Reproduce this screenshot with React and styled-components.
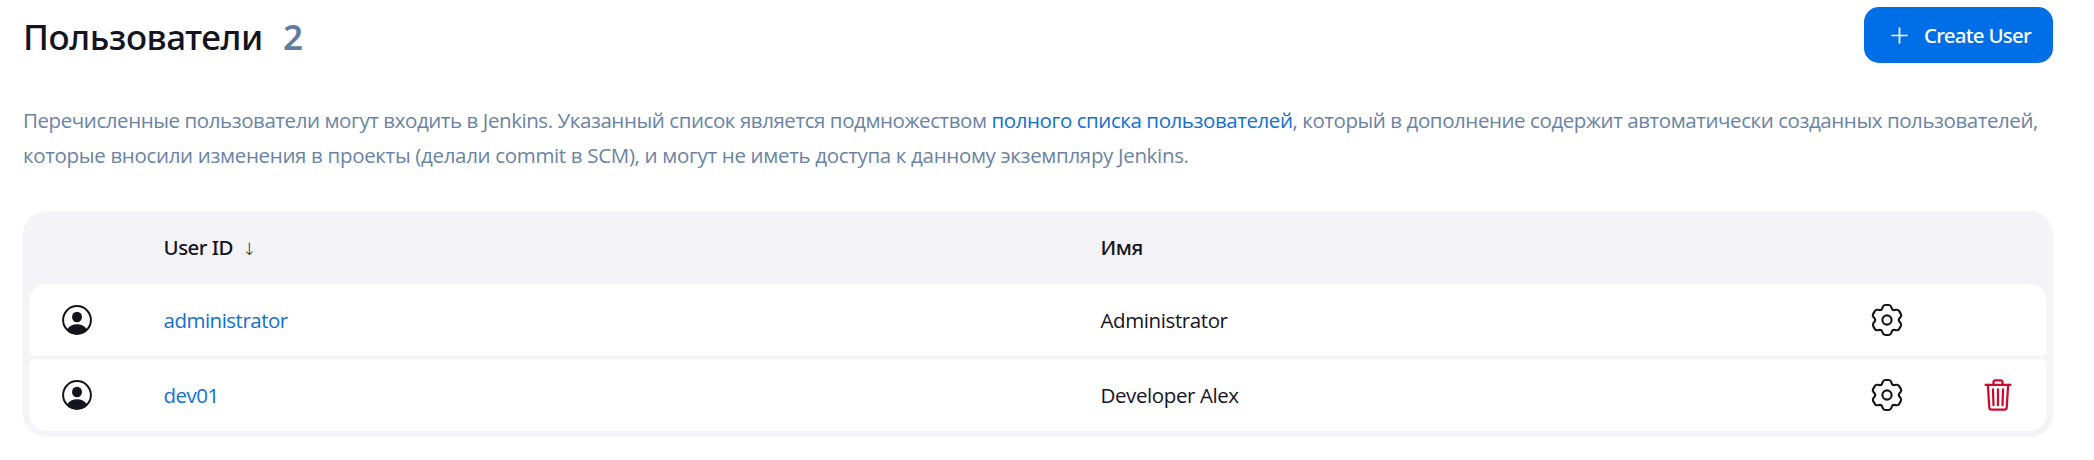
import React from "react";
import styled, { createGlobalStyle } from "styled-components";
import { IoTrashOutline } from "react-icons/io5";

const GlobalStyle = createGlobalStyle`
  * { box-sizing: border-box; }
  body {
    margin: 0;
    background: #fff;
    color: #14141f;
    font: 400 20.5px/35px "Open Sans", "Noto Sans", sans-serif;
  }
`;

const Page = styled.main`
  width: 2094px;
  height: 460px;
  padding: 7px 41px 0 23px;
  overflow: hidden;
`;

const AppBar = styled.header`
  display: flex;
  align-items: center;
  justify-content: space-between;
  height: 56px;
  margin-bottom: 40px;
`;

const Title = styled.h1`
  display: flex;
  gap: 20px;
  margin: 4px 0 0;
  font-family: "Noto Sans", sans-serif;
  font-size: 35px;
  line-height: 48px;
  font-weight: 500;
  letter-spacing: -0.4px;
`;

const Count = styled.span`
  color: #607ca0;
  font-weight: 600;
`;

const CreateButton = styled.button`
  display: flex;
  align-items: center;
  gap: 16px;
  width: 189px;
  height: 56px;
  padding: 0 0 0 27px;
  border: 0;
  border-radius: 15px;
  background: #006ee6;
  color: #fff;
  font: 500 20.5px/35px "Noto Sans", sans-serif;
  letter-spacing: -0.75px;
  white-space: nowrap;
`;

const Description = styled.p`
  margin: 0 0 38px;
  color: #6a83a5;
  white-space: nowrap;
`;

const Line = styled.span`
  display: block;
  letter-spacing: ${(p) => p.$tracking}px;
`;

const Link = styled.a`
  color: #1070d4;
  text-decoration: none;
`;

const Table = styled.section`
  display: flex;
  flex-direction: column;
  gap: 3px;
  padding: 0 6px 6px;
  border-radius: 24px;
  background: #f3f3f8;
`;

const Row = styled.div`
  display: grid;
  grid-template-columns: 134.5px 937px 727.5px 1fr 112px;
  align-items: center;
  height: 72px;
  border-radius: 6px;
  background: #fff;
  letter-spacing: -0.4px;

  &:nth-child(2) {
    border-top-left-radius: 18px;
    border-top-right-radius: 18px;
  }
  &:last-child {
    border-bottom-left-radius: 18px;
    border-bottom-right-radius: 18px;
  }
`;

const UserLink = styled(Link)`
  letter-spacing: -0.5px;
`;

const HeadRow = styled(Row)`
  height: 73px;
  margin-bottom: -3px;
  background: none;
  font-family: "Noto Sans", sans-serif;
  font-weight: 500;
  letter-spacing: -0.5px;
`;

const SortArrow = styled.span`
  margin-left: 9px;
  font-family: "DejaVu Sans", "DejaVu Sans Light", sans-serif;
  font-size: 17px;
  line-height: 0;
  font-weight: 200;
`;

const IconCell = styled.div`
  display: flex;
  padding-left: ${(p) => p.$inset}px;
  color: ${(p) => (p.$danger ? "#cc0a2f" : "#14141f")};
`;

function PlusIcon() {
  return (
    <svg width="17" height="17" viewBox="0 0 17 17" stroke="currentColor" strokeWidth="1.7" strokeLinecap="round">
      <path d="M8.5 1v15M1 8.5h15" />
    </svg>
  );
}

function PersonIcon() {
  return (
    <svg width="30" height="30" viewBox="0 0 30 30">
      <circle cx="15" cy="15" r="13.9" fill="none" stroke="currentColor" strokeWidth="2" />
      <ellipse cx="15" cy="12" rx="5" ry="5.3" fill="currentColor" />
      <path d="M5 24.6C7 21 11 19.3 15 19.3s8 1.7 10 5.3a13.9 13.9 0 0 1-20 0z" fill="currentColor" />
    </svg>
  );
}

const toothAngles = [0, 60, 120, 180, 240, 300];

function GearIcon() {
  return (
    <svg width="36" height="36" viewBox="-18 -18 36 36" fill="none" stroke="currentColor" strokeWidth="2.1" strokeLinecap="round">
      <circle r="4.6" />
      {toothAngles.map((angle) => (
        <path
          key={angle}
          transform={`rotate(${angle})`}
          d="M-5.9-10.2C-5-10.7-4.7-11.5-4.3-12.9Q-3.6-15-1.9-15H1.9Q3.6-15 4.3-12.9C4.7-11.5 5-10.7 5.9-10.2"
        />
      ))}
    </svg>
  );
}

const users = [
  { id: "administrator", name: "Administrator", removable: false },
  { id: "dev01", name: "Developer Alex", removable: true },
];

export default function App() {
  return (
    <Page>
      <GlobalStyle />
      <AppBar>
        <Title>
          Пользователи <Count>2</Count>
        </Title>
        <CreateButton>
          <PlusIcon />
          Create User
        </CreateButton>
      </AppBar>
      <Description>
        <Line $tracking={-0.43}>
          Перечисленные пользователи могут входить в Jenkins. Указанный список является подмножеством{" "}
          <Link>полного списка пользователей</Link>, который в дополнение содержит автоматически созданных
          пользователей,
        </Line>
        <Line $tracking={-0.33}>
          которые вносили изменения в проекты (делали commit в SCM), и могут не иметь доступа к данному экземпляру
          Jenkins.
        </Line>
      </Description>
      <Table>
        <HeadRow>
          <span />
          <span>
            User ID<SortArrow>↓</SortArrow>
          </span>
          <span>Имя</span>
        </HeadRow>
        {users.map((user) => (
          <Row key={user.id}>
            <IconCell $inset={32.5}>
              <PersonIcon />
            </IconCell>
            <UserLink>{user.id}</UserLink>
            <span>{user.name}</span>
            <IconCell $inset={41}>
              <GearIcon />
            </IconCell>
            <IconCell $inset={45} $danger>
              {user.removable && <IoTrashOutline size={36} />}
            </IconCell>
          </Row>
        ))}
      </Table>
    </Page>
  );
}
